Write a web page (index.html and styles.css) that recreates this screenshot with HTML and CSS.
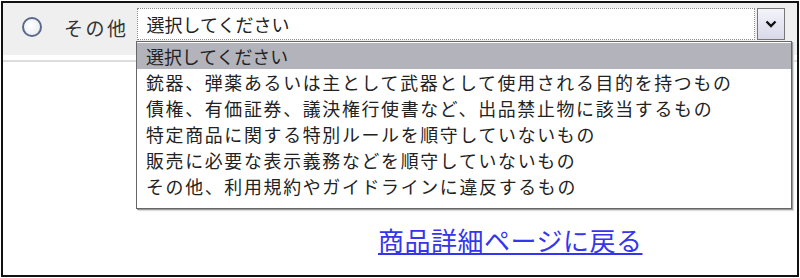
FILE: index.html
```html
<!DOCTYPE html>
<html lang="ja">
<head>
    <meta charset="UTF-8">
    <title>違反報告</title>
    <link rel="stylesheet" href="styles.css">
</head>
<body>
    <div class="frame">
        <div class="choice-row">
            <span class="radio"></span>
            <span class="choice-label">その他</span>
            <div class="select">
                <div class="select-value">選択してください</div>
                <div class="select-button">
                    <svg width="12" height="8" viewBox="0 0 12 8">
                        <path d="M1.5 1.5 L6 6 L10.5 1.5" fill="none" stroke="#111" stroke-width="2.4"/>
                    </svg>
                </div>
            </div>
        </div>
        <div class="row-rule"></div>

        <ul class="option-list">
            <li class="option selected">選択してください</li>
            <li class="option">銃器、弾薬あるいは主として武器として使用される目的を持つもの</li>
            <li class="option">債権、有価証券、議決権行使書など、出品禁止物に該当するもの</li>
            <li class="option">特定商品に関する特別ルールを順守していないもの</li>
            <li class="option">販売に必要な表示義務などを順守していないもの</li>
            <li class="option">その他、利用規約やガイドラインに違反するもの</li>
        </ul>

        <div class="back">
            <a href="#" class="back-link">商品詳細ページに戻る</a>
        </div>
    </div>
</body>
</html>
```

FILE: styles.css
```css
body {
    margin: 0;
    background-color: #ffffff;
    font-family: "Noto Sans CJK JP", "Liberation Sans", sans-serif;
    color: #222222;
}

.frame {
    position: relative;
    margin: 1px 0 0 1px;
    width: 794px;
    height: 272px;
    border: 2px solid #111111;
    background-color: #ffffff;
}

.choice-row {
    display: flex;
    align-items: center;
    height: 52px;
    box-sizing: border-box;
    padding: 5px 0 15px 0;
    background-color: #efefef;
}

.radio {
    width: 16px;
    height: 16px;
    margin: 6px 0 0 19px;
    border: 2px solid #5a6a88;
    border-radius: 50%;
    background: radial-gradient(circle at 40% 40%, #ffffff, #e4e8ee);
    flex-shrink: 0;
}

.choice-label {
    margin: 6px 0 0 22px;
    font-size: 19px;
    letter-spacing: 2.5px;
    line-height: 1;
    color: #333333;
}

.select {
    display: flex;
    margin-left: 8px;
    height: 32px;
}

.select-value {
    width: 618px;
    box-sizing: border-box;
    padding-left: 9px;
    border: 1px dotted #8a8a8a;
    background-color: #ffffff;
    font-size: 18px;
    line-height: 30px;
    color: #222222;
}

.select-button {
    display: flex;
    align-items: center;
    justify-content: center;
    width: 28px;
    height: 32px;
    box-sizing: border-box;
    margin-left: 2px;
    border: 1px solid #777777;
    background: linear-gradient(#f4f4fa, #d8d8ea);
}

.row-rule {
    margin-top: 5px;
    height: 2px;
    background-color: #dcdcdc;
}

.option-list {
    position: absolute;
    left: 133px;
    top: 38px;
    width: 654px;
    margin: 0;
    padding: 1px 0 9px 0;
    list-style: none;
    background-color: #ffffff;
    border: 1px solid #666666;
    box-shadow: 1px 1px 0 #9a9a9a, 2px 2px 1px #dddddd;
}

.option {
    height: 26px;
    padding-left: 9px;
    font-size: 17.9px;
    letter-spacing: 1.7px;
    line-height: 26px;
    white-space: nowrap;
    color: #222222;
}

.option.selected {
    letter-spacing: 0;
    background-color: #b3b3bb;
}

.back {
    padding: 163px 0 0 375px;
}

.back-link {
    font-size: 26px;
    letter-spacing: 0.5px;
    line-height: 30px;
    color: #3535ee;
    text-decoration: underline;
}
```
